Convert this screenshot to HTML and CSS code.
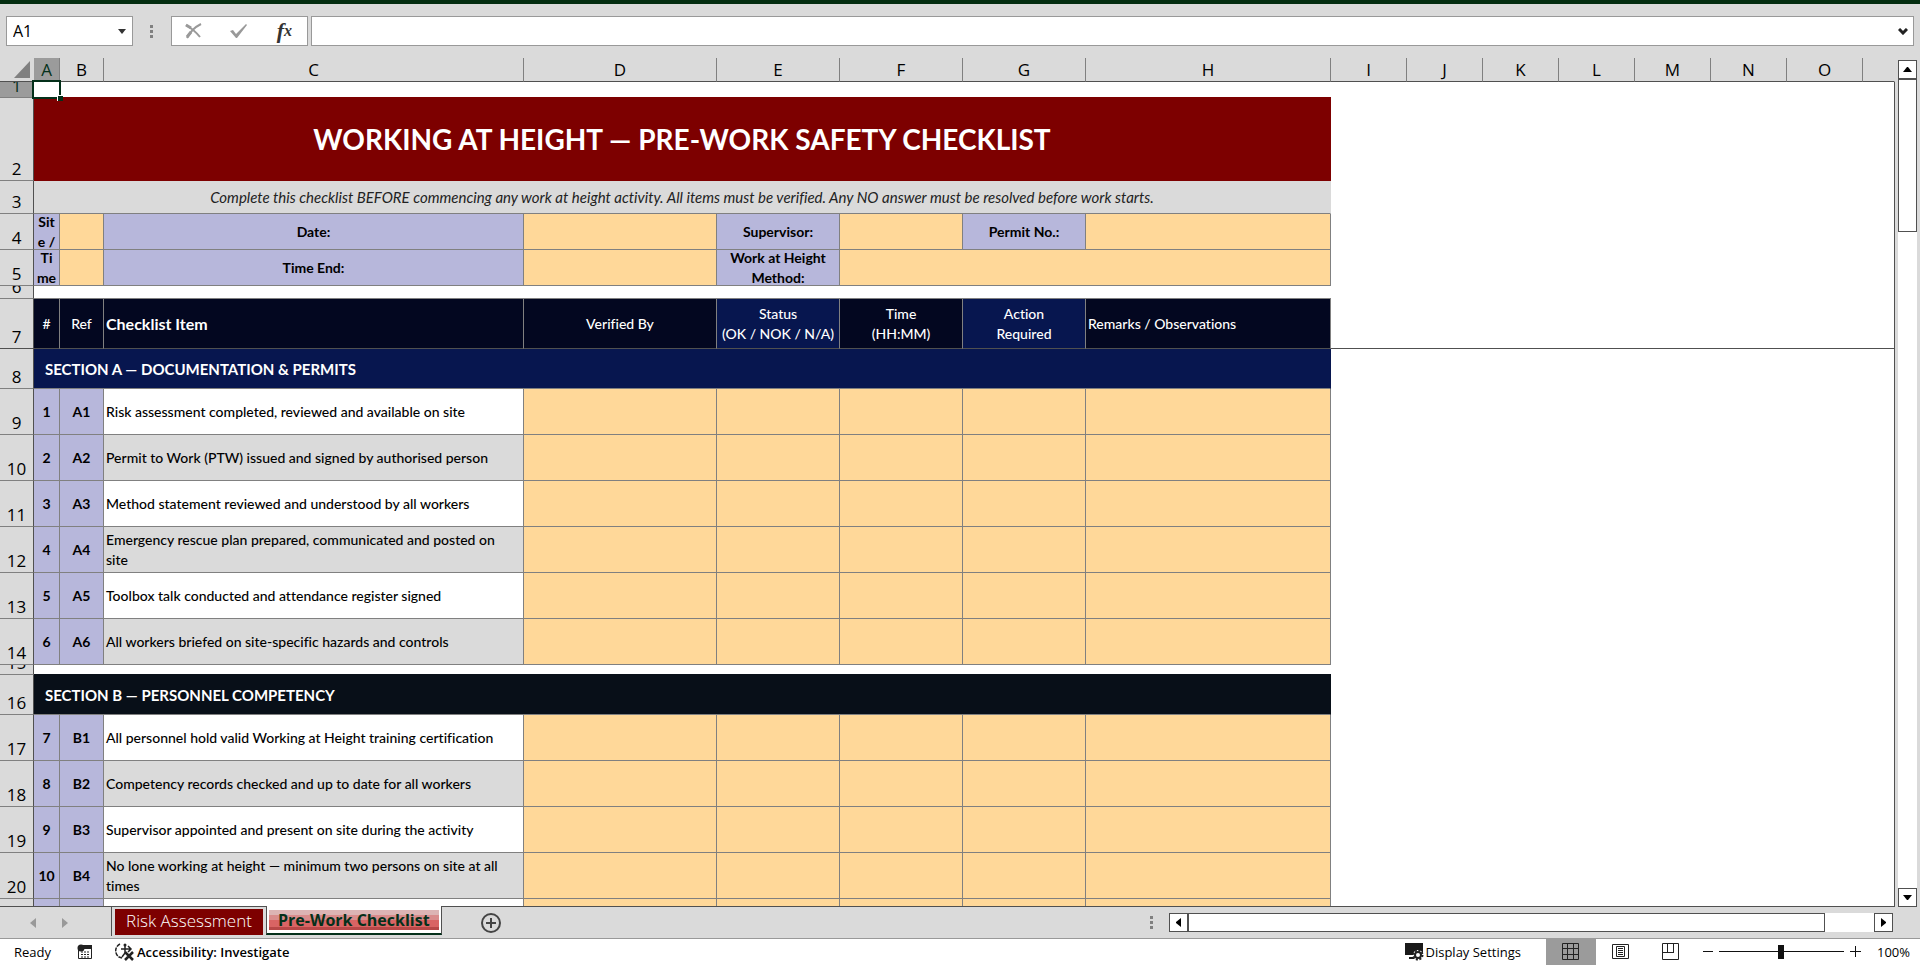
FILE: index.html
```
<!DOCTYPE html>
<html lang="en">
<head>
  <meta charset="UTF-8">
  <title>Pre-Work Checklist</title>
  <link rel="stylesheet" href="styles.css">
</head>
<body>

  <div class="title-strip"></div>

  <div class="formula-bar">
    <div class="name-box">
      <input type="text" value="A1" aria-label="Name box">
      <button aria-label="Open name list"><svg width="8" height="5" viewBox="0 0 8 5"><path d="M0 0h8L4 5z" fill="#333"/></svg></button>
    </div>
    <span class="dots"><i></i><i></i><i></i></span>
    <div class="formula-buttons">
      <button aria-label="Cancel"><svg width="17" height="16" viewBox="0 0 17 16"><path d="M1 2c5 3 10 7 14 12M16 1C10 4 5 9 2 15" fill="none" stroke="#999" stroke-width="2"/><path d="M1 2l5 3M2 14l4-5" stroke="#999" stroke-width="3"/></svg></button>
      <button aria-label="Enter"><svg width="18" height="16" viewBox="0 0 18 16"><path d="M0 8l3-1 3 4L16 1l1 1L7 15H6z" fill="#999"/></svg></button>
      <button class="fx" aria-label="Insert function">f<small>x</small></button>
    </div>
    <div class="formula-input">
      <input type="text" aria-label="Formula">
      <button aria-label="Expand formula bar"><svg width="10" height="7" viewBox="0 0 10 7"><path d="M1 1l4 4 4-4" fill="none" stroke="#222" stroke-width="3"/></svg></button>
    </div>
  </div>

  <div class="sheet-area">
    <div class="grid">
      <table id="sheet">
        <colgroup>
          <col class="col-head"><col class="col-a"><col class="col-b"><col class="col-c"><col class="col-d">
          <col class="col-e"><col class="col-e"><col class="col-e"><col class="col-h">
          <col class="col-i"><col class="col-i"><col class="col-i"><col class="col-i"><col class="col-i"><col class="col-i"><col class="col-i"><col>
        </colgroup>
        <thead>
          <tr>
            <th class="corner"><svg width="16" height="17" viewBox="0 0 16 17"><path d="M16 0v17H0z" fill="#808080"/></svg></th>
            <th class="active">A</th><th>B</th><th>C</th><th>D</th><th>E</th><th>F</th><th>G</th><th>H</th>
            <th>I</th><th>J</th><th>K</th><th>L</th><th>M</th><th>N</th><th>O</th><th class="last"></th>
          </tr>
        </thead>
        <tbody>
          <tr class="r16">
            <th class="active"><div>1</div></th>
            <td class="blank selected"><span class="handle"></span></td>
            <td class="blank over-title" colspan="7"></td>
            <td class="blank" colspan="8"></td>
          </tr>
          <tr class="r83">
            <th><div>2</div></th>
            <td class="title" colspan="8"><div>WORKING AT HEIGHT — PRE-WORK SAFETY CHECKLIST</div></td>
            <td class="blank" colspan="8"></td>
          </tr>
          <tr class="r33">
            <th><div>3</div></th>
            <td class="note" colspan="8"><div>Complete this checklist BEFORE commencing any work at height activity. All items must be verified. Any NO answer must be resolved before work starts.</div></td>
            <td class="blank" colspan="8"></td>
          </tr>
          <tr class="r36">
            <th><div>4</div></th>
            <td class="label narrow"><div>Site /</div></td><td class="entry"></td>
            <td class="label"><div>Date:</div></td><td class="entry"></td>
            <td class="label"><div>Supervisor:</div></td><td class="entry"></td>
            <td class="label"><div>Permit No.:</div></td><td class="entry"></td>
            <td class="blank" colspan="8"></td>
          </tr>
          <tr class="r36">
            <th><div>5</div></th>
            <td class="label narrow"><div>Time</div></td><td class="entry"></td>
            <td class="label"><div>Time End:</div></td><td class="entry"></td>
            <td class="label"><div>Work at Height Method:</div></td><td class="entry" colspan="3"></td>
            <td class="blank" colspan="8"></td>
          </tr>
          <tr class="r13">
            <th><div>6</div></th>
            <td class="blank lined" colspan="8"></td>
            <td class="blank" colspan="8"></td>
          </tr>
          <tr class="r50 frozen">
            <th><div>7</div></th>
            <td class="head"><div>#</div></td>
            <td class="head"><div>Ref</div></td>
            <td class="head left big"><div>Checklist Item</div></td>
            <td class="head"><div>Verified By</div></td>
            <td class="head blue"><div>Status<br>(OK / NOK / N/A)</div></td>
            <td class="head"><div>Time<br>(HH:MM)</div></td>
            <td class="head blue"><div>Action<br>Required</div></td>
            <td class="head left"><div>Remarks / Observations</div></td>
            <td class="blank" colspan="8"></td>
          </tr>
          <tr class="r40">
            <th><div>8</div></th>
            <td class="section" colspan="8"><div>SECTION A — DOCUMENTATION &amp; PERMITS</div></td>
            <td class="blank" colspan="8"></td>
          </tr>
        </tbody>
      </table>
    </div>

    <div class="vscroll">
      <button aria-label="Scroll up"><svg width="9" height="5" viewBox="0 0 9 5"><path d="M0 5h9L5 0H4z"/></svg></button>
      <div class="thumb"></div>
      <div class="track"></div>
      <button aria-label="Scroll down"><svg width="9" height="5" viewBox="0 0 9 5"><path d="M0 0h9L5 5H4z"/></svg></button>
    </div>
  </div>

  <div class="tab-bar">
    <div class="tab-nav">
      <button aria-label="Previous sheet"><svg width="6" height="10" viewBox="0 0 6 10"><path d="M6 0v10L0 5z" fill="#999"/></svg></button>
      <button aria-label="Next sheet"><svg width="6" height="10" viewBox="0 0 6 10"><path d="M0 0v10l6-5z" fill="#999"/></svg></button>
    </div>
    <div class="tabs">
      <button class="tab red">Risk Assessment</button>
      <button class="tab current"><span>Pre-Work Checklist</span></button>
      <button class="add" aria-label="New sheet"><svg width="22" height="22" viewBox="0 0 22 22"><circle cx="11" cy="11" r="9" fill="none" stroke="#444" stroke-width="2"/><path d="M11 6v10M6 11h10" stroke="#444" stroke-width="2"/></svg></button>
    </div>
    <span class="dots"><i></i><i></i><i></i></span>
    <div class="hscroll">
      <button aria-label="Scroll left"><svg width="5" height="9" viewBox="0 0 5 9"><path d="M5 0v9L0 5V4z"/></svg></button>
      <div class="thumb"></div>
      <div class="track"></div>
      <button aria-label="Scroll right"><svg width="5" height="9" viewBox="0 0 5 9"><path d="M0 0v9l5-4V4z"/></svg></button>
    </div>
  </div>

  <div class="status-bar">
    <span class="ready">Ready</span>
    <button class="macro" aria-label="Record macro"><svg width="16" height="16" viewBox="0 0 16 16"><path d="M6 1.500h8.500v13h-13V6" fill="none" stroke="#222"/><path d="M6 1h9v4H6z" fill="#222"/><circle cx="4" cy="4" r="3.500" fill="#222"/><path d="M4 8h9M4 10.500h9M4 13h9" stroke="#222" stroke-dasharray="2 1"/></svg></button>
    <button class="access"><svg width="19" height="18" viewBox="0 0 19 18"><path d="M5 1a7.500 7.500 0 0 0-1 13l3 1" fill="none" stroke="#222" stroke-width="1.500" stroke-dasharray="4 1"/><circle cx="10" cy="2" r="1.500" fill="#222"/><path d="M6 6h10M10 3v7l-3 4M13 3l3 3-3 3" fill="none" stroke="#222" stroke-width="1.500"/><path d="M10 9l8 8M18 9l-8 8" stroke="#222" stroke-width="2.500"/></svg>Accessibility: Investigate</button>
    <div class="status-right">
      <button class="display"><svg width="19" height="18" viewBox="0 0 19 18"><path d="M0 0h18v12H0zM4 14h6v2H4z" fill="#1a1a1a"/><circle cx="13" cy="12" r="5" fill="#fff"/><circle cx="13" cy="12" r="4.500" fill="none" stroke="#222" stroke-width="2" stroke-dasharray="2 1.500"/><circle cx="13" cy="12" r="3" fill="none" stroke="#222" stroke-width="2"/></svg>Display Settings</button>
      <button class="view on" aria-label="Normal view"><svg width="17" height="17" viewBox="0 0 17 17"><path d="M.5.5h16v16H.5zM5.500 0v17M11.500 0v17M0 5.500h17M0 11.500h17" fill="none" stroke="#222"/></svg></button>
      <button class="view" aria-label="Page layout"><svg width="17" height="17" viewBox="0 0 17 17"><path d="M.5 1.500h16v14H.5zM4.500 3.500h8v10h-8zM6 5.500h5M6 7.500h5M6 9.500h5M6 11.500h5" fill="none" stroke="#222"/></svg></button>
      <button class="view" aria-label="Page break preview"><svg width="17" height="17" viewBox="0 0 17 17"><path d="M.5.5h16v16H.5zM5.500 0v9.500M11.500 0v9.500M0 9.500h12" fill="none" stroke="#222"/></svg></button>
      <div class="zoom">
        <button aria-label="Zoom out"><svg width="10" height="11" viewBox="0 0 10 11"><path d="M0 5.500h10" stroke="#111"/></svg></button>
        <input type="range" min="0" max="100" value="50" aria-label="Zoom">
        <button aria-label="Zoom in"><svg width="11" height="11" viewBox="0 0 11 11"><path d="M0 5.500h11M5.500 0v11" stroke="#111"/></svg></button>
        <button class="percent">100%</button>
      </div>
    </div>
  </div>

  <script>
    const body = document.querySelector('#sheet tbody');

    const sectionA = [
      'Risk assessment completed, reviewed and available on site',
      'Permit to Work (PTW) issued and signed by authorised person',
      'Method statement reviewed and understood by all workers',
      'Emergency rescue plan prepared, communicated and posted on site',
      'Toolbox talk conducted and attendance register signed',
      'All workers briefed on site-specific hazards and controls'
    ];

    const sectionB = [
      'All personnel hold valid Working at Height training certification',
      'Competency records checked and up to date for all workers',
      'Supervisor appointed and present on site during the activity',
      'No lone working at height — minimum two persons on site at all times',
      ''
    ];

    function addRow(className, html) {
      body.insertAdjacentHTML('beforeend', `<tr class="${className}">${html}<td class="blank" colspan="8"></td></tr>`);
    }

    function addItems(items, letter, firstNo, firstRow) {
      items.forEach((text, i) => {
        const shade = i % 2 ? ' shade' : '';
        const no = text ? firstNo + i : '';
        const ref = text ? letter + (i + 1) : '';
        addRow('r46', `
          <th><div>${text ? firstRow + i : ''}</div></th>
          <td class="label"><div>${no}</div></td>
          <td class="label"><div>${ref}</div></td>
          <td class="item${shade}"><div>${text}</div></td>
          ${'<td class="entry"></td>'.repeat(5)}`);
      });
    }

    addItems(sectionA, 'A', 1, 9);
    addRow('r10', '<th><div>15</div></th><td class="blank over-black" colspan="8"></td>');
    addRow('r40', '<th><div>16</div></th><td class="section black" colspan="8"><div>SECTION B — PERSONNEL COMPETENCY</div></td>');
    addItems(sectionB, 'B', 7, 17);
  </script>

</body>
</html>
```
FILE: styles.css
```
* {
  box-sizing: border-box;
}

body {
  margin: 0;
  height: 100vh;
  display: flex;
  flex-direction: column;
  overflow: hidden;
  background: #dadada;
  color: #000;
  font-family: "Open Sans", sans-serif;
  font-size: 14px;
}

button {
  display: flex;
  align-items: center;
  justify-content: center;
  padding: 0;
  border: 0;
  background: none;
  color: inherit;
  font: inherit;
  white-space: nowrap;
}

input {
  min-width: 0;
  padding: 0;
  border: 0;
  outline: 0;
  background: none;
  font: inherit;
}

.title-strip {
  flex: none;
  height: 4px;
  background: #032d10;
}

/* formula bar */
.formula-bar {
  flex: none;
  display: flex;
  height: 54px;
  padding: 12px 6px 12px 6px;
}

.name-box,
.formula-buttons,
.formula-input {
  display: flex;
  align-items: center;
  background: #fff;
  border: 1px solid #999;
}

.name-box {
  width: 127px;
  padding: 0 6px;
}

.name-box input {
  flex: 1;
  font-size: 16px;
}

.dots {
  display: flex;
  flex-direction: column;
  justify-content: center;
  gap: 2px;
}

.dots i {
  width: 3px;
  height: 3px;
  background: #808080;
}

.formula-bar .dots {
  margin: 0 18px 0 17px;
}

.formula-buttons {
  width: 137px;
  justify-content: space-between;
  padding: 0 15px 0 13px;
  margin-right: 3px;
}

.fx {
  font: italic bold 22px "Liberation Serif", serif;
  color: #333;
}

.fx small {
  font-size: 16px;
}

.formula-input {
  flex: 1;
  padding-right: 5px;
}

.formula-input input {
  flex: 1;
}

/* sheet */
.sheet-area {
  flex: 1;
  min-height: 0;
  display: flex;
}

.grid {
  flex: 1;
  min-width: 0;
  overflow: hidden;
  border-bottom: 1px solid #505050;
}

table {
  width: 100%;
  table-layout: fixed;
  border-collapse: separate;
  border-spacing: 0;
}

.col-head { width: 34px; }
.col-a { width: 26px; }
.col-b { width: 44px; }
.col-c { width: 420px; }
.col-d { width: 193px; }
.col-e { width: 123px; }
.col-h { width: 245px; }
.col-i { width: 76px; }

th,
td {
  padding: 0;
  height: var(--row);
}

th {
  font-weight: normal;
  font-size: 17px;
}

thead th {
  height: 24px;
  line-height: 23px;
  border-right: 1px solid #808080;
  border-bottom: 1px solid #505050;
}

thead .corner,
thead .last {
  border-right-color: transparent;
}

thead .corner svg {
  display: block;
  margin-left: 14px;
}

th.active {
  background: #9b9b9b;
  color: #04301a;
}

tbody th {
  border-right: 1px solid #505050;
  border-bottom: 1px solid #808080;
}

tbody th div {
  display: flex;
  align-items: flex-end;
  justify-content: center;
  height: calc(var(--row) - 1px);
  overflow: hidden;
  line-height: 22px;
}

.r10 { --row: 10px; }
.r13 { --row: 13px; }
.r16 { --row: 16px; }
.r33 { --row: 33px; }
.r36 { --row: 36px; }
.r40 { --row: 40px; }
.r46 { --row: 46px; }
.r50 { --row: 50px; }
.r83 { --row: 83px; }

td {
  border-right: 1px solid #808080;
  border-bottom: 1px solid #808080;
  font-family: Lato, sans-serif;
  font-size: 14px;
  font-weight: 500;
  font-variant-ligatures: none;
  line-height: 20px;
}

td div {
  display: flex;
  align-items: center;
  justify-content: center;
  height: calc(var(--row) - 1px);
  overflow: hidden;
  text-align: center;
}

.blank {
  background: #fff;
  border: 0;
}

.blank:last-child {
  border-right: 1px solid #505050;
}

.blank.lined {
  border-bottom: 1px solid #808080;
}

.over-title {
  border-bottom: 1px solid #7d0000;
}

.over-black {
  border-bottom: 1px solid #080f18;
}

.selected {
  position: relative;
}

.selected::after {
  content: "";
  position: absolute;
  inset: -2px -1px -1px -2px;
  border: 2px solid #04301a;
}

.handle {
  position: absolute;
  z-index: 1;
  right: -3px;
  bottom: -3px;
  width: 6px;
  height: 6px;
  background: #04301a;
  border: solid #fff;
  border-width: 1px 0 0 1px;
}

.title {
  background: #7d0000;
  border-color: #7d0000;
  color: #fff;
  font-size: 28px;
  font-weight: bold;
}

.note {
  background: #dadada;
  border-right-color: #dadada;
  font-size: 15px;
  font-style: italic;
  font-weight: normal;
  color: #222;
}

.label {
  background: #b7b7db;
  font-weight: bold;
}

.narrow div {
  padding: 0 2px;
  word-break: break-all;
}

.entry {
  background: #ffd899;
}

.head {
  background: #030720;
  color: #fff;
}

.head.blue {
  background: #07164f;
}

.left div {
  justify-content: flex-start;
  padding-left: 2px;
}

.big {
  font-size: 16px;
  font-weight: bold;
}

.frozen th,
.frozen td {
  border-bottom: 1px solid #505050;
}

.section {
  background: #07164f;
  border-right-color: #07164f;
  color: #fff;
  font-size: 15px;
  font-weight: bold;
}

.section.black {
  background: #080f18;
  border-right-color: #080f18;
}

.section div {
  justify-content: flex-start;
  padding-left: 11px;
}

.item {
  background: #fff;
}

.item.shade {
  background: #dadada;
}

.item div {
  justify-content: flex-start;
  text-align: left;
  padding: 0 12px 0 2px;
}

/* scroll bars */
.vscroll {
  flex: none;
  display: flex;
  flex-direction: column;
  width: 25px;
  padding: 2px 3px 0 3px;
}

.vscroll button,
.hscroll button,
.thumb {
  flex: none;
  background: #fff;
  border: 1px solid #505050;
}

.vscroll button,
.hscroll button {
  width: 19px;
  height: 19px;
}

.vscroll .thumb {
  height: 153px;
}

.track {
  flex: 1;
  background: #fff;
}

/* sheet tabs */
.tab-bar {
  flex: none;
  display: flex;
  height: 32px;
  border-bottom: 1px solid #999;
}

.tab-nav {
  display: flex;
  gap: 26px;
  width: 112px;
  padding-left: 30px;
}

.tabs {
  flex: 1;
  display: flex;
  align-items: flex-start;
}

.tab {
  font-size: 16px;
}

.tab.red {
  width: 154px;
  height: 29px;
  padding-bottom: 4px;
  border: solid #dadada;
  border-width: 2px 3px 1px 3px;
  background: #7d0000;
  color: #fff;
  font-size: 17px;
  font-weight: 300;
  box-shadow: -1px 0 0 #505050;
}

.tab.current {
  height: 29px;
  margin-top: -1px;
  padding: 2px;
  background: #fff;
  border: solid #505050;
  border-width: 0 1px 2px 1px;
  border-bottom-color: #04301a;
  color: #04301a;
  font-weight: bold;
}

.tab.current span {
  padding: 0 9px;
  line-height: 20px;
  background: linear-gradient(#dcb4b4 25%, #d98c8c 25% 50%, #d96464 50% 85%, #b84848 85%);
}

.add {
  margin: 5px 0 0 38px;
}

.tab-bar .dots {
  margin-right: 16px;
}

.hscroll {
  flex: none;
  display: flex;
  width: 39%;
  max-width: 724px;
  margin: 6px 27px 0 0;
}

.hscroll .thumb {
  width: 88%;
  height: 19px;
}

.hscroll .track {
  height: 19px;
}

/* status bar */
.status-bar {
  flex: none;
  display: flex;
  align-items: center;
  height: 27px;
  padding: 0 10px 2px 14px;
  background: #fff;
  font-size: 13px;
}

.macro {
  margin: 0 22px 0 26px;
}

.access {
  gap: 3px;
  font-weight: 600;
}

.status-right {
  display: flex;
  align-items: center;
  height: 100%;
  margin-left: auto;
}

.display {
  gap: 1px;
  margin-right: 25px;
}

.view {
  width: 50px;
  height: 27px;
}

.view.on {
  background: #9b9b9b;
}

.zoom {
  display: flex;
  align-items: center;
  gap: 6px;
  margin-left: 7px;
}

.zoom input {
  appearance: none;
  width: 125px;
  height: 14px;
  margin: 0;
  background: linear-gradient(#111, #111) center / 100% 1px no-repeat;
}

.zoom input::-webkit-slider-thumb {
  appearance: none;
  width: 6px;
  height: 14px;
  background: #111;
}

.percent {
  margin-left: 10px;
}
```
